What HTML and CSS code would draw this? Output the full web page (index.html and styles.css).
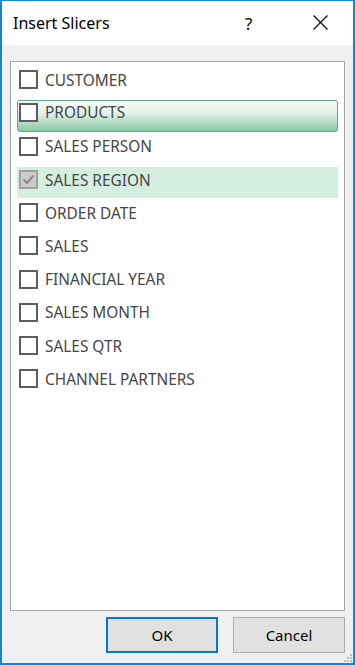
FILE: index.html
```html
<!DOCTYPE html>
<html>
<head>
<meta charset="utf-8">
<link rel="stylesheet" href="styles.css">
</head>
<body>
<div class="dialog">
  <div class="titlebar">
    <span class="title">Insert Slicers</span>
    <span class="help">?</span>
    <span class="close">
      <svg width="15" height="15" viewBox="0 0 15 15"><path d="M0.5 0.5 L14.5 14.5 M14.5 0.5 L0.5 14.5" stroke="#000" stroke-width="1.1" fill="none"/></svg>
    </span>
  </div>
  <div class="body">
    <div class="list">
      <div class="row"><span class="cb"></span><span class="lbl">CUSTOMER</span></div>
      <div class="row hot"><span class="cb"></span><span class="lbl">PRODUCTS</span></div>
      <div class="row"><span class="cb"></span><span class="lbl">SALES PERSON</span></div>
      <div class="row sel"><span class="cb checked"><svg width="15" height="15" viewBox="0 0 15 15"><path d="M2.5 7.5 L6 11 L12.5 3.5" stroke="#8a8a8a" stroke-width="2" fill="none"/></svg></span><span class="lbl">SALES REGION</span></div>
      <div class="row"><span class="cb"></span><span class="lbl">ORDER DATE</span></div>
      <div class="row"><span class="cb"></span><span class="lbl">SALES</span></div>
      <div class="row"><span class="cb"></span><span class="lbl">FINANCIAL YEAR</span></div>
      <div class="row"><span class="cb"></span><span class="lbl">SALES MONTH</span></div>
      <div class="row"><span class="cb"></span><span class="lbl">SALES QTR</span></div>
      <div class="row"><span class="cb"></span><span class="lbl">CHANNEL PARTNERS</span></div>
    </div>
    <div class="buttons">
      <button class="btn default">OK</button>
      <button class="btn">Cancel</button>
    </div>
  </div>
  <svg class="grip" width="10" height="10" viewBox="0 0 10 10">
    <rect x="7" y="1" width="2" height="2" fill="#bdbdbd"/>
    <rect x="4" y="4" width="2" height="2" fill="#bdbdbd"/>
    <rect x="7" y="4" width="2" height="2" fill="#bdbdbd"/>
    <rect x="1" y="7" width="2" height="2" fill="#bdbdbd"/>
    <rect x="4" y="7" width="2" height="2" fill="#bdbdbd"/>
    <rect x="7" y="7" width="2" height="2" fill="#bdbdbd"/>
  </svg>
</div>
</body>
</html>
```
FILE: styles.css
```css
html, body {
  margin: 0;
  padding: 0;
}
body {
  width: 355px;
  height: 665px;
  font-family: "Noto Sans", "Open Sans", "Liberation Sans", sans-serif;
}
.dialog {
  position: relative;
  box-sizing: border-box;
  width: 355px;
  height: 665px;
  border: 2px solid #1883d7;
  border-top-width: 1px;
  background: #f0f0f0;
  display: flex;
  flex-direction: column;
}
.titlebar {
  height: 44px;
  background: #ffffff;
  display: flex;
  align-items: center;
  flex-shrink: 0;
}
.title {
  margin-left: 11px;
  font-size: 16px;
  color: #000;
  flex: 1;
  margin-top: 0;
}
.help {
  font-size: 17px;
  color: #000;
  width: 10px;
  margin-right: 58px;
  margin-top: 0;
}
.close {
  display: flex;
  margin-right: 25px;
  margin-top: -2px;
}
.body {
  flex: 1;
  display: flex;
  flex-direction: column;
  padding: 16px 8px 10px 8px;
}
.list {
  height: 550px;
  box-sizing: border-box;
  border: 1px solid #a5a5a5;
  background: #ffffff;
  padding: 5px 6px 0 6px;
  display: flex;
  flex-direction: column;
  gap: 2.2px;
}
.row {
  height: 31px;
  box-sizing: border-box;
  display: flex;
  align-items: flex-start;
  padding: 3px 0 0 2px;
}
.row.hot {
  border: 1px solid #68a684;
  border-radius: 3px;
  background: linear-gradient(to bottom, #f6fbf8 0%, #e1f2e8 40%, #8ccaa6 100%);
  height: 32px;
  margin-top: -0.5px;
  padding: 2px 0 0 1px;
}
.row.sel {
  background: #d4efe1;
}
.cb {
  width: 19px;
  height: 19px;
  box-sizing: border-box;
  border: 2px solid #5d5d5d;
  background: #ffffff;
  flex-shrink: 0;
  display: flex;
  align-items: center;
  justify-content: center;
}
.cb.checked {
  border-color: #a0a0a0;
  background: #cccccc;
}
.lbl {
  margin-left: 7px;
  font-size: 15.4px;
  line-height: 19px;
  color: #454545;
  margin-top: 0.5px;
}
.buttons {
  display: flex;
  justify-content: flex-end;
  gap: 15px;
  margin-top: 6px;
}
.btn {
  width: 112px;
  height: 36px;
  box-sizing: border-box;
  background: #e1e1e1;
  border: 1px solid #adadad;
  font-family: "Noto Sans", "Open Sans", "Liberation Sans", sans-serif;
  font-size: 15px;
  color: #000;
  padding: 0;
  margin: 0;
}
.btn.default {
  border: 2px solid #0078d7;
}
.grip {
  position: absolute;
  right: 0;
  bottom: 0;
}
```
